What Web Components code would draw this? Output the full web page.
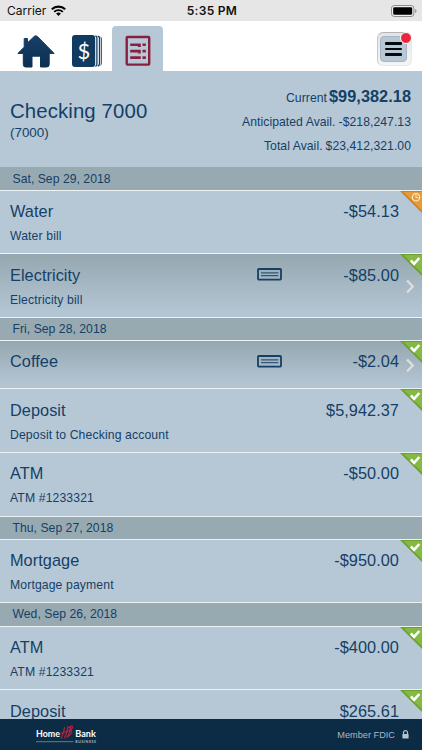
<!DOCTYPE html>
<html lang="en">
<head>
<meta charset="utf-8">
<title>Checking 7000</title>
<style>
  html, body {
    margin: 0;
    height: 100%;
    overflow: hidden;
  }
  body {
    font-family: "Liberation Sans", Arial, sans-serif;
    color: #153f67;
    --panel: #b6c8d6;
    --bar: #98aab1;
    --line: #edf2f5;
    --navy: #0c2b44;
  }
</style>
</head>
<body>
<bank-app>
  <status-bar slot="top" carrier="Carrier" time="5:35 PM"></status-bar>
  <nav-bar slot="top"></nav-bar>
  <account-summary slot="top" name="Checking 7000" number="(7000)">
    <summary-line label="Current" amount="$99,382.18" strong></summary-line>
    <summary-line label="Anticipated Avail." amount="-$218,247.13"></summary-line>
    <summary-line label="Total Avail." amount="$23,412,321.00"></summary-line>
  </account-summary>

  <date-bar first>Sat, Sep 29, 2018</date-bar>
  <transaction-row name="Water" amount="-$54.13" status="pending">Water bill</transaction-row>
  <transaction-row name="Electricity" amount="-$85.00" status="cleared" check>Electricity bill</transaction-row>
  <date-bar>Fri, Sep 28, 2018</date-bar>
  <transaction-row name="Coffee" amount="-$2.04" status="cleared" check short></transaction-row>
  <transaction-row name="Deposit" amount="$5,942.37" status="cleared">Deposit to Checking account</transaction-row>
  <transaction-row name="ATM" amount="-$50.00" status="cleared">ATM #1233321</transaction-row>
  <date-bar>Thu, Sep 27, 2018</date-bar>
  <transaction-row name="Mortgage" amount="-$950.00" status="cleared">Mortgage payment</transaction-row>
  <date-bar>Wed, Sep 26, 2018</date-bar>
  <transaction-row name="ATM" amount="-$400.00" status="cleared">ATM #1233321</transaction-row>
  <transaction-row name="Deposit" amount="$265.61" status="cleared"></transaction-row>

  <bank-footer slot="bottom">Member FDIC</bank-footer>
</bank-app>

<script>
class BankApp extends HTMLElement {
  constructor() {
    super();
    this.attachShadow({ mode: "open" });
    this.shadowRoot.innerHTML = `
      <style>
        :host {
          display: flex;
          flex-direction: column;
          height: 100vh;
          background: var(--panel);
        }
        main {
          flex: 1;
          min-height: 0;
          overflow: hidden;
        }
      </style>
      <slot name="top"></slot>
      <main><slot></slot></main>
      <slot name="bottom"></slot>
    `;
  }
}

class StatusBar extends HTMLElement {
  connectedCallback() {
    this.attachShadow({ mode: "open" });
    this.shadowRoot.innerHTML = `
      <style>
        :host {
          display: grid;
          grid-template-columns: 1fr auto 1fr;
          align-items: center;
          flex: none;
          height: 21px;
          padding: 0 5px 0 7px;
          box-sizing: border-box;
          background: #e6e6e6;
          color: #111;
          font: 12px/21px Inter, sans-serif;
        }
        .left { display: flex; align-items: center; gap: 5px; }
        .time { font-weight: 600; letter-spacing: 0.3px; }
        .battery { justify-self: end; }
        svg { display: block; }
      </style>
      <div class="left">
        <span>${this.getAttribute("carrier")}</span>
        <svg width="15" height="11" viewBox="0 0 15 11" fill="none" stroke="#000">
          <path d="M.8 4.3a9.6 9.6 0 0 1 13.4 0" stroke-width="2.1"/>
          <path d="M3.2 6.9a6.1 6.1 0 0 1 8.6 0" stroke-width="1.9"/>
          <path d="M7.5 11 5.1 8.6a3.4 3.4 0 0 1 4.8 0z" fill="#000" stroke="none"/>
        </svg>
      </div>
      <span class="time">${this.getAttribute("time")}</span>
      <svg class="battery" width="26" height="12" viewBox="0 0 26 12">
        <rect x=".5" y=".5" width="22.4" height="11" rx="2.8" fill="#eee" stroke="#8b8b8b"/>
        <rect x="2.2" y="2.2" width="19" height="7.6" rx="1.4"/>
        <path d="M24.2 4a2.2 2.2 0 0 1 0 4z" fill="#8b8b8b"/>
      </svg>
    `;
  }
}

class NavBar extends HTMLElement {
  constructor() {
    super();
    this.attachShadow({ mode: "open" });
    this.shadowRoot.innerHTML = `
      <style>
        :host {
          display: flex;
          align-items: flex-end;
          flex: none;
          height: 50px;
          background: #fff;
        }
        .tab {
          display: flex;
          justify-content: center;
          width: 50px;
          height: 45px;
          padding-top: 9px;
          box-sizing: border-box;
        }
        .home { margin-left: 11px; }
        .accounts { margin-left: 1px; }
        .active {
          background: var(--panel);
          border-radius: 4px 4px 0 0;
          width: 51px;
        }
        svg { display: block; }
        menu-button { margin: 0 10px 5px auto; }
      </style>
      <div class="tab home">
        <svg width="38" height="33" viewBox="0 0 38 33">
          <defs>
            <linearGradient id="navy" x1="0" y1="0" x2="0" y2="1">
              <stop offset="0" stop-color="#173f68"/>
              <stop offset="1" stop-color="#0c2f50"/>
            </linearGradient>
          </defs>
          <path fill="url(#navy)" stroke="url(#navy)" stroke-width="1" stroke-linejoin="round" d="M7.2 3.5h3.3v4.3L17.2 1.4q1.6-1.3 3.2 0L37.1 18.4H32.2V29.500q0 2.500-2.500 2.500H23.500V21.200H15V32H8.700q-2.400 0-2.400-2.500V18.400H.9l6.300-6.300z"/>
        </svg>
      </div>
      <div class="tab accounts">
        <svg width="30" height="33" viewBox="0 0 30 33">
          <rect width="23.2" height="32" rx="3" fill="#113a60"/>
          <path fill="none" stroke="#113a60" stroke-width="1.3" d="M23.3.8q1.6.2 1.6 2v26.500q0 1.800-1.600 2.100M25.700 1.100q1.800.3 1.800 2v25.500q0 2.200-1.800 2.500"/>
          <path fill="none" stroke="#113a60" stroke-width=".9" d="M28.2 1.700q1.200.8 1.200 2.200v24q0 1.700-1.200 2.600"/>
          <text x="11.8" y="23.8" text-anchor="middle" fill="#fff" font-family="Lato, sans-serif" font-size="22">$</text>
        </svg>
      </div>
      <div class="tab active">
        <svg width="26" height="31" viewBox="0 0 26 31">
          <rect x="1.7" y="2" width="22.5" height="27.6" rx=".8" fill="none" stroke="#89203f" stroke-width="2.4"/>
          <path stroke="#89203f" stroke-width="2.6" d="M5.2 9.7h10.600M5.200 16.100h10.600M5.200 22.600h10.600M17.500 9.700h3.300M17.500 16.100h3.300M17.500 22.600h3.300"/>
          <path stroke="#89203f" stroke-width="1.2" d="M12.800 11.400h3M12.800 17.800h3"/>
        </svg>
      </div>
      <menu-button></menu-button>
    `;
  }
}

class MenuButton extends HTMLElement {
  constructor() {
    super();
    this.attachShadow({ mode: "open" });
    this.shadowRoot.innerHTML = `
      <style>
        :host {
          display: flex;
          position: relative;
          width: 35px;
          height: 34px;
          padding: 4px;
          box-sizing: border-box;
          border: 1px solid #e9e9e9;
          border-top-color: #b4b4b4;
          border-left-color: #c8c8c8;
          border-radius: 6px;
          background: linear-gradient(#e4e4e4, #f5f5f5);
        }
        .face {
          display: flex;
          flex-direction: column;
          justify-content: center;
          align-items: center;
          gap: 3px;
          flex: 1;
          margin: -1px 0 -1px -2px;
          border: 1px solid #a6b5c1;
          border-radius: 4px;
          background: #b6c8d6;
        }
        .face i {
          width: 17px;
          height: 2.5px;
          border-radius: 1px;
          background: #05080b;
        }
        .dot {
          position: absolute;
          top: -1px;
          right: -1px;
          width: 10px;
          height: 10px;
          border: 1px solid #fff;
          border-radius: 50%;
          background: #e8273f;
        }
      </style>
      <div class="face"><i></i><i></i><i></i></div>
      <span class="dot"></span>
    `;
  }
}

class AccountSummary extends HTMLElement {
  connectedCallback() {
    this.attachShadow({ mode: "open" });
    this.shadowRoot.innerHTML = `
      <style>
        :host {
          display: flex;
          justify-content: space-between;
          flex: none;
          height: 95.5px;
          padding: 0 11px 0 10px;
          box-sizing: border-box;
        }
        .account { padding-top: 28px; }
        .name { font-size: 20.4px; line-height: 24px; letter-spacing: 0.1px; }
        .number { padding-top: 1px; font-size: 13.4px; line-height: 18px; }
        .balances { padding-top: 12.5px; }
      </style>
      <div class="account">
        <div class="name">${this.getAttribute("name")}</div>
        <div class="number">${this.getAttribute("number")}</div>
      </div>
      <div class="balances"><slot></slot></div>
    `;
  }
}

class SummaryLine extends HTMLElement {
  connectedCallback() {
    this.attachShadow({ mode: "open" });
    this.shadowRoot.innerHTML = `
      <style>
        :host {
          display: flex;
          justify-content: flex-end;
          align-items: baseline;
          gap: 3px;
          height: 24.6px;
          font-size: 12.2px;
          line-height: 24.6px;
          letter-spacing: 0.05px;
        }
        :host([strong]) {
          gap: 2px;
          margin-bottom: 1.5px;
        }
        :host([strong]) .amount {
          font-size: 16.3px;
          font-weight: bold;
        }
      </style>
      <span class="label">${this.getAttribute("label")}</span>
      <span class="amount">${this.getAttribute("amount")}</span>
    `;
  }
}

class DateBar extends HTMLElement {
  constructor() {
    super();
    this.attachShadow({ mode: "open" });
    this.shadowRoot.innerHTML = `
      <style>
        :host {
          display: block;
          height: 23.3px;
          padding-left: 12.5px;
          box-sizing: border-box;
          border-top: 1px solid var(--line);
          background: var(--bar);
          font-size: 12.2px;
          line-height: 22.9px;
          letter-spacing: 0.03px;
        }
        :host([first]) {
          height: 23.1px;
          border-top-color: var(--bar);
        }
      </style>
      <slot></slot>
    `;
  }
}

const FLAGS = {
  cleared: `
    <path fill="#6fa02f" d="M0 0h22v22z"/>
    <path fill="#83b944" d="M3.5 1H22v18.5z"/>
    <path fill="none" stroke="#fff" stroke-width="2.6" d="m10.8 6.5 3.3 3.3 5.2-5.8"/>`,
  pending: `
    <path fill="#c8842c" d="M0 0h22v22z"/>
    <path fill="#e59b3a" d="M3.5 1H22v18.5z"/>
    <circle cx="16" cy="6.3" r="3.7" fill="none" stroke="#fdeccb" stroke-width="1.2"/>
    <path fill="none" stroke="#fdeccb" d="M16 3.9v2.7h2.3"/>`
};

class TransactionRow extends HTMLElement {
  connectedCallback() {
    this.attachShadow({ mode: "open" });
    const check = this.hasAttribute("check");
    this.shadowRoot.innerHTML = `
      <style>
        :host {
          display: block;
          position: relative;
          height: 63.6px;
          padding: 10.5px 23px 0 10px;
          box-sizing: border-box;
          border-top: 1px solid var(--line);
          overflow: hidden;
          background: var(--panel);
        }
        :host([short]) {
          height: 48.3px;
          padding-top: 10.2px;
        }
        :host([check]) { background: linear-gradient(#95a8b0, #b3c5d3 92%); }
        .head {
          display: grid;
          grid-template-columns: 1fr 26px 116px;
          align-items: center;
          font-size: 16.3px;
          line-height: 20px;
          letter-spacing: 0.06px;
        }
        .amount { grid-column: 3; text-align: right; }
        .memo {
          margin-top: 7px;
          font-size: 12.2px;
          line-height: 16px;
          letter-spacing: 0.13px;
        }
        svg { display: block; }
        .flag { position: absolute; top: 0; right: 0; }
        .arrow { position: absolute; top: 25px; right: 6px; }
        :host([short]) .arrow { top: 17px; }
      </style>
      <div class="head">
        <span>${this.getAttribute("name")}</span>
        ${check ? `
          <svg width="26" height="13" viewBox="0 0 26 13" fill="none" stroke="#153f67">
            <rect x="1" y="1" width="23" height="10.6" rx=".8" stroke-width="1.8"/>
            <path d="M4 4.9h17.300M4 7.7h17.300" stroke-width="1"/>
          </svg>` : ""}
        <span class="amount">${this.getAttribute("amount")}</span>
      </div>
      <div class="memo"><slot></slot></div>
      <svg class="flag" width="22" height="22" viewBox="0 0 22 22">${FLAGS[this.getAttribute("status")]}</svg>
      ${check ? `
        <svg class="arrow" width="11" height="15" viewBox="0 0 11 15" fill="none">
          <path d="m2 1.5 5.8 6-5.8 6" stroke="#98a3aa" stroke-width="3.6"/>
          <path d="m2 1.5 5.8 6-5.8 6" stroke="#d8dcde" stroke-width="2.8"/>
        </svg>` : ""}
    `;
  }
}

class BankFooter extends HTMLElement {
  constructor() {
    super();
    this.attachShadow({ mode: "open" });
    this.shadowRoot.innerHTML = `
      <style>
        :host {
          display: flex;
          justify-content: space-between;
          align-items: center;
          flex: none;
          height: 31px;
          padding: 0 13px 0 36px;
          box-sizing: border-box;
          background: var(--navy);
          color: #a9bac7;
          font-size: 9.2px;
        }
        .note { display: flex; align-items: center; gap: 7px; }
        svg { display: block; }
      </style>
      <svg width="61" height="22" viewBox="0 0 61 22">
        <g font-family="Lato, sans-serif" font-weight="bold" font-size="9" fill="#fff">
          <text x="0" y="13" textLength="24" lengthAdjust="spacingAndGlyphs">Home</text>
          <text x="39.3" y="13" textLength="20.5" lengthAdjust="spacingAndGlyphs">Bank</text>
        </g>
        <path fill="none" stroke="#bd1f3d" stroke-width="1.2" stroke-linecap="round" d="M28.500 3.500q-.5 5.500-3.300 10.500M32 2.500q-.8 6.500-3.500 11.300M25 9.300l8-2.500M34.500 3.300q-.8 6-3 9.700M33 3.500q4-2.800 3.300.3-.6 2.200-3 3 3.500-.4 2.200 2.200-1.700 3.200-4.500 3.600"/>
        <path stroke="#7e91a1" stroke-width=".8" d="M0 17.700h37.500"/>
        <text x="39.3" y="19.3" textLength="20.7" font-family="Lato, sans-serif" font-weight="bold" font-size="3.6" fill="#a9b8c4">BUSINESS</text>
      </svg>
      <div class="note">
        <slot></slot>
        <svg width="7" height="9" viewBox="0 0 7 9">
          <path fill="none" stroke="#b7c4ce" stroke-width="1.2" d="M1.500 4.500V2.600a2 2 0 0 1 4 0v1.900"/>
          <rect x=".4" y="4" width="6.2" height="4.6" rx=".5" fill="#b7c4ce"/>
        </svg>
      </div>
    `;
  }
}

customElements.define("bank-app", BankApp);
customElements.define("status-bar", StatusBar);
customElements.define("nav-bar", NavBar);
customElements.define("menu-button", MenuButton);
customElements.define("account-summary", AccountSummary);
customElements.define("summary-line", SummaryLine);
customElements.define("date-bar", DateBar);
customElements.define("transaction-row", TransactionRow);
customElements.define("bank-footer", BankFooter);
</script>
</body>
</html>
